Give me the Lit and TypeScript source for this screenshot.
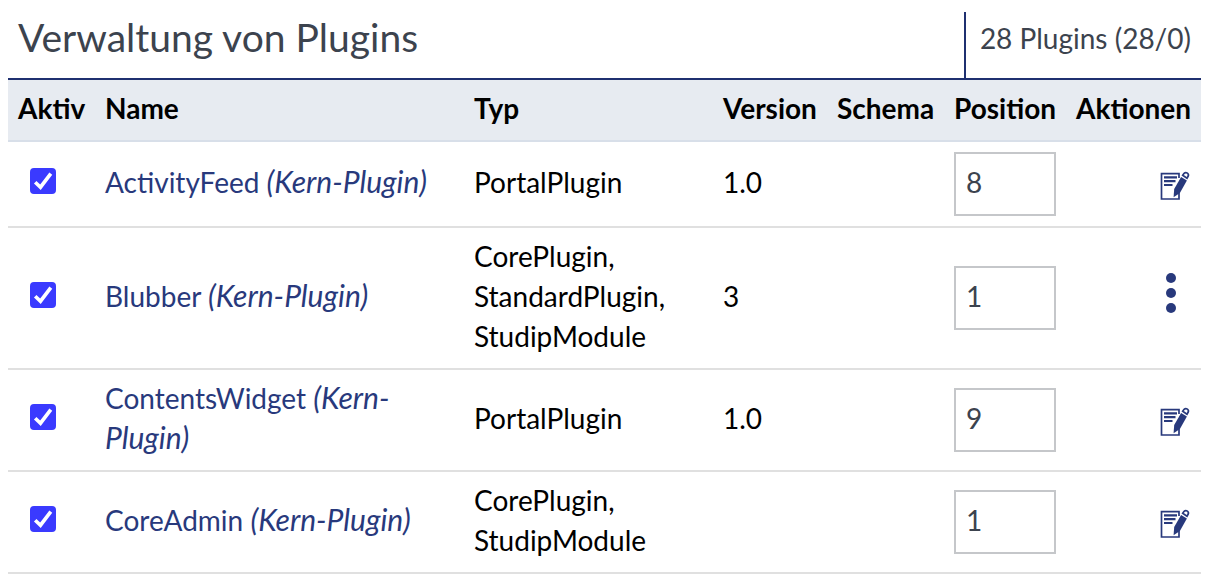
import { LitElement, html, css } from "lit";
import { customElement, state } from "lit/decorators.js";

interface Plugin {
  name: string;
  types: string;
  version: string;
  position: number;
  menu?: boolean;
}

const editIcon = html`<svg width="40" height="40" viewBox="0 0 40 40" aria-hidden="true">
  <path d="M28 16v-4.3H10.5V37H28v-6" fill="none" stroke="currentColor" stroke-width="1.7" />
  <path d="M13 15.3h13M13 19.2h11.5M13 23h8.5" stroke="currentColor" stroke-width="2.2" />
  <path d="M30.1 14.9l5.8 3.6-7 12.4-6.3 4.3.6-8.2z" fill="currentColor" />
  <path d="M31.7 13.3l1.4-2q1.5-1.4 3.3-.2 1.7 1.3.7 3.2l-1.1 1.9z" fill="none" stroke="currentColor" stroke-width="1.7" />
</svg>`;

const menuIcon = html`<svg width="40" height="46" viewBox="0 0 40 46" aria-hidden="true">
  <g fill="currentColor"><circle cx="20" cy="5" r="5" /><circle cx="20" cy="20" r="5" /><circle cx="20" cy="35" r="5" /></g>
</svg>`;

@customElement("app-root")
export class AppRoot extends LitElement {
  static styles = css`
    :host {
      display: block;
      padding: 12px 16px 12px 8px;
      font-family: Lato, sans-serif;
      font-size: 28px;
      line-height: 40px;
      color: #000;
      background: #fff;
    }
    header {
      display: flex;
      align-items: stretch;
      justify-content: space-between;
      border-bottom: 2px solid #1f3070;
      color: #3c434e;
    }
    h1 { margin: 0; padding: 0 10px 16px; font-size: 39px; line-height: 50px; font-weight: 400; }
    .count { border-left: 2px solid #1f3070; padding: 6px 10px 0 14px; }
    table { width: 100%; border-collapse: separate; border-spacing: 0; table-layout: fixed; }
    th, td { box-sizing: border-box; padding: 8px 10px 12px; }
    th {
      text-align: left;
      font-weight: 700;
      background: #e7ebf1;
      border-bottom: 2px solid #d8dfe9;
      white-space: nowrap;
    }
    td { border-bottom: 2px solid #e0e0e0; vertical-align: middle; }
    td.field { padding: 10px; }
    .c-active { width: 87px; }
    .c-type { width: 249px; }
    .c-version { width: 114px; }
    .c-schema { width: 117px; }
    .c-position { width: 122px; }
    .c-actions { width: 135px; }
    a { color: #28397c; text-decoration: none; }
    em { font-size: 30px; line-height: 1; }
    .actions { text-align: right; }
    button {
      display: flex;
      margin: 0 0 0 auto;
      border: 0;
      background: none;
      padding: 0;
      color: #28397c;
    }
    .check { display: grid; width: 26px; margin: 0 0 6px 12px; }
    .check > * { grid-area: 1 / 1; }
    .tick {
      appearance: none;
      width: 26px;
      height: 26px;
      margin: 0;
      border: 2px solid #767676;
      border-radius: 4px;
      background: #fff;
    }
    .tick:checked { border-color: #3a3aff; background: #3a3aff; }
    .mark { pointer-events: none; visibility: hidden; }
    .tick:checked + .mark { visibility: visible; }
    .number {
      box-sizing: border-box;
      display: block;
      width: 100%;
      height: 64px;
      border: 2px solid #c5c7ca;
      border-radius: 0;
      padding: 0 10px 4px;
      font: inherit;
      color: #3c434e;
    }
  `;

  @state() private plugins: Plugin[] = [
    { name: "ActivityFeed", types: "PortalPlugin", version: "1.0", position: 8 },
    { name: "Blubber", types: "CorePlugin, StandardPlugin, StudipModule", version: "3", position: 1, menu: true },
    { name: "ContentsWidget", types: "PortalPlugin", version: "1.0", position: 9 },
    { name: "CoreAdmin", types: "CorePlugin, StudipModule", version: "", position: 1 },
  ];

  private row(p: Plugin) {
    return html`<tr>
      <td class="field">
        <label class="check">
          <input class="tick" type="checkbox" checked aria-label="${p.name} aktiv" />
          <svg class="mark" width="26" height="26" viewBox="0 0 26 26" aria-hidden="true">
            <path d="M5.2 14.2l5.3 5L20.8 5.6" fill="none" stroke="#fff" stroke-width="3.6" />
          </svg>
        </label>
      </td>
      <td><a href="#">${p.name} <em>(Kern-Plugin)</em></a></td>
      <td>${p.types}</td>
      <td>${p.version}</td>
      <td></td>
      <td class="field"><input class="number" type="text" .value=${String(p.position)} aria-label="Position ${p.name}" /></td>
      <td class="actions">
        <button type="button" aria-label=${p.menu ? "Aktionsmenü" : "Bearbeiten"}>${p.menu ? menuIcon : editIcon}</button>
      </td>
    </tr>`;
  }

  render() {
    return html`
      <header>
        <h1>Verwaltung von Plugins</h1>
        <div class="count">28 Plugins (28/0)</div>
      </header>
      <table>
        <thead>
          <tr>
            <th class="c-active">Aktiv</th>
            <th>Name</th>
            <th class="c-type">Typ</th>
            <th class="c-version">Version</th>
            <th class="c-schema">Schema</th>
            <th class="c-position">Position</th>
            <th class="c-actions actions">Aktionen</th>
          </tr>
        </thead>
        <tbody>${this.plugins.map((p) => this.row(p))}</tbody>
      </table>`;
  }
}
